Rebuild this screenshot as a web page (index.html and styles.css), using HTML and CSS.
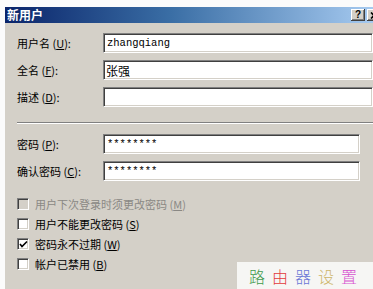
FILE: index.html
```html
<!DOCTYPE html>
<html>
<head>
<meta charset="utf-8">
<link rel="stylesheet" href="styles.css">
</head>
<body>
<div class="dialog">
  <div class="titlebar">
    <span class="title">新用户</span>
    <div class="tbtns">
      <span class="tbtn">?</span>
      <span class="tbtn close"><svg width="8" height="7" viewBox="0 0 8 7"><path d="M1 0.5 L7 6.5 M7 0.5 L1 6.5" stroke="#000" stroke-width="1.6" fill="none"/></svg></span>
    </div>
  </div>
  <div class="content">
    <div class="group">
      <div class="row"><label class="lbl">用户名 (<u>U</u>):</label><div class="field wide mono">zhangqiang</div></div>
      <div class="row"><label class="lbl">全名 (<u>F</u>):</label><div class="field wide cjk">张强</div></div>
      <div class="row"><label class="lbl">描述 (<u>D</u>):</label><div class="field wide"></div></div>
    </div>
    <div class="sep"></div>
    <div class="group">
      <div class="row"><label class="lbl">密码 (<u>P</u>):</label><div class="field narrow mono">********</div></div>
      <div class="row"><label class="lbl">确认密码 (<u>C</u>):</label><div class="field narrow mono">********</div></div>
    </div>
    <div class="checks">
      <div class="chk disabled"><span class="box"></span><span>用户下次登录时须更改密码 (<u>M</u>)</span></div>
      <div class="chk"><span class="box"></span><span>用户不能更改密码 (<u>S</u>)</span></div>
      <div class="chk"><span class="box"><svg width="9" height="9" viewBox="0 0 9 9"><path d="M1 4 L3 6.5 L8 1.5" fill="none" stroke="#000" stroke-width="1.6"/></svg></span><span>密码永不过期 (<u>W</u>)</span></div>
      <div class="chk"><span class="box"></span><span>帐户已禁用 (<u>B</u>)</span></div>
    </div>
  </div>
  <div class="watermark"><span class="w1">路</span><span class="w2">由</span><span class="w3">器</span><span class="w4">设</span><span class="w5">置</span></div>
</div>
</body>
</html>
```

FILE: styles.css
```css
html, body {
  margin: 0;
  padding: 0;
  background: #fbfbfb;
  width: 373px;
  height: 289px;
  overflow: hidden;
}
.dialog {
  position: relative;
  margin: 7px 0 0 5px;
  width: 368px;
  height: 282px;
  background: #d4d0c8;
  font-family: "Noto Sans CJK SC", "Liberation Sans", sans-serif;
  font-size: 11px;
  color: #000;
}
.titlebar {
  height: 16px;
  background: linear-gradient(to right, #0a246a 0%, #3a6ea5 45%, #a6caf0 100%);
  display: flex;
  align-items: center;
  justify-content: space-between;
}
.title {
  color: #fff;
  font-weight: bold;
  font-size: 12px;
  padding-left: 2px;
  line-height: 16px;
}
.tbtns {
  display: flex;
  gap: 2px;
  margin-right: -8px;
}
.tbtn {
  width: 14px;
  height: 12px;
  background: #d4d0c8;
  box-shadow: inset -1px -1px 0 #404040, inset 1px 1px 0 #fff, inset -2px -2px 0 #808080;
  font-family: "Liberation Sans", sans-serif;
  font-weight: bold;
  font-size: 10px;
  line-height: 12px;
  text-align: center;
  color: #000;
  display: flex;
  align-items: center;
  justify-content: center;
}
.content {
  padding: 10px 0 0 12px;
}
.group {
  display: flex;
  flex-direction: column;
  gap: 7px;
}
.row {
  display: flex;
  align-items: center;
  height: 20px;
}
.lbl {
  width: 86px;
  flex: none;
  line-height: 14px;
}
.field {
  height: 20px;
  box-sizing: border-box;
  background: #fff;
  border-top: 1px solid #808080;
  border-left: 1px solid #808080;
  border-right: 1px solid #fff;
  border-bottom: 1px solid #fff;
  box-shadow: inset 1px 1px 0 #404040, inset -1px -1px 0 #d4d0c8;
  padding: 0 3px;
  display: flex;
  align-items: center;
}
.wide { width: 270px; }
.narrow { width: 257px; }
.mono {
  font-family: "Liberation Mono", monospace;
  font-size: 10.5px;
}
.cjk {
  font-size: 12px;
  padding-left: 2px;
}
.sep {
  height: 0;
  margin: 15px 0 10px 0;
  border-top: 1px solid #808080;
  border-bottom: 1px solid #fff;
}
.checks {
  margin-top: 17px;
  display: flex;
  flex-direction: column;
  gap: 8px;
}
.chk {
  display: flex;
  align-items: center;
  gap: 6px;
  height: 12px;
  line-height: 12px;
}
.box {
  width: 12px;
  height: 12px;
  box-sizing: border-box;
  background: #fff;
  border-top: 1px solid #808080;
  border-left: 1px solid #808080;
  border-right: 1px solid #fff;
  border-bottom: 1px solid #fff;
  box-shadow: inset 1px 1px 0 #404040, inset -1px -1px 0 #d4d0c8;
  display: flex;
  align-items: center;
  justify-content: center;
}
.disabled { color: #8a8884; }
.disabled .box { background: #d4d0c8; }
.watermark {
  position: absolute;
  left: 232px;
  top: 255px;
  width: 136px;
  height: 27px;
  background: #f6f6f4;
  display: flex;
  align-items: center;
  gap: 7px;
  padding-left: 12px;
  box-sizing: border-box;
  font-size: 16px;
  font-weight: 300;
}
.w1 { color: #3f9a4c; }
.w2 { color: #e23a3a; }
.w3 { color: #6a78d6; }
.w4 { color: #cdb568; }
.w5 { color: #d653d0; }
```
